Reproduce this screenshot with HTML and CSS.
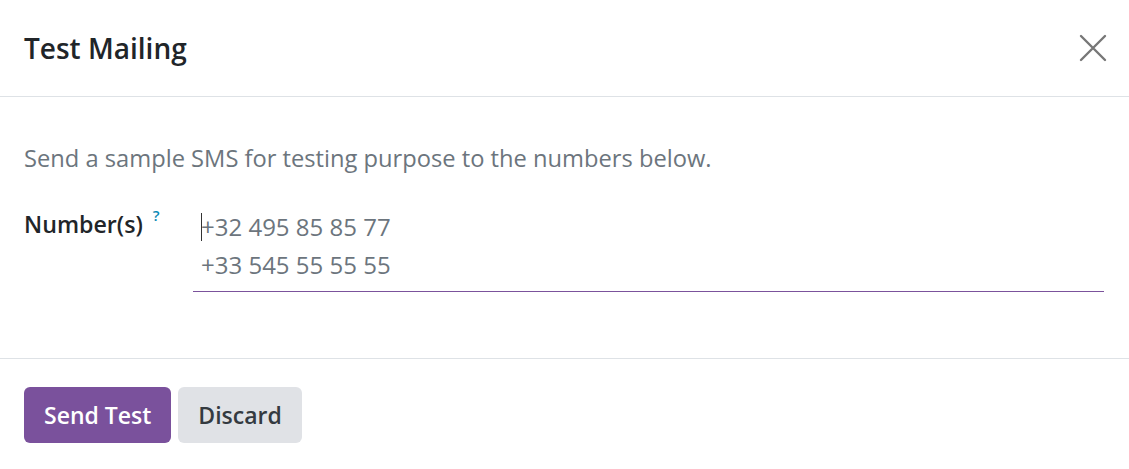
FILE: index.html
```html
<!DOCTYPE html>
<html lang="en">
<head>
    <meta charset="UTF-8">
    <title>Test Mailing</title>
    <link rel="stylesheet" href="styles.css">
</head>
<body>
    <div class="modal">
        <header class="modal-header">
            <h4 class="modal-title">Test Mailing</h4>
            <button type="button" class="btn-close" aria-label="Close">
                <svg width="28" height="28" viewBox="0 0 28 28">
                    <path d="M2 2 L26 26 M26 2 L2 26" stroke="#777" stroke-width="2.4" stroke-linecap="round" fill="none"/>
                </svg>
            </button>
        </header>
        <main class="modal-body">
            <p class="intro">Send a sample SMS for testing purpose to the numbers below.</p>
            <div class="form-row">
                <label class="field-label" for="numbers">Number(s)<sup class="tooltip">?</sup></label>
                <div class="field">
                    <div class="numbers" id="numbers"><span class="caret"></span>+32 495 85 85 77<br>+33 545 55 55 55</div>
                </div>
            </div>
        </main>
        <footer class="modal-footer">
            <button type="button" class="btn btn-primary">Send Test</button>
            <button type="button" class="btn btn-secondary">Discard</button>
        </footer>
    </div>
</body>
</html>
```
FILE: styles.css
```css
body {
    margin: 0;
    background-color: #fff;
    font-family: "Open Sans", "Noto Sans", sans-serif;
    color: #212529;
}
.modal {
    width: 1129px;
    height: 469px;
    display: flex;
    flex-direction: column;
}
.modal-header {
    height: 96px;
    display: flex;
    align-items: center;
    justify-content: space-between;
    padding: 0 22px 0 24px;
    border-bottom: 1px solid #dee2e6;
}
.modal-title {
    margin: 0;
    font-size: 28px;
    font-weight: 600;
    color: #212529;
}
.btn-close {
    background: none;
    border: none;
    padding: 0;
    width: 28px;
    height: 28px;
    cursor: pointer;
}
.modal-body {
    padding: 44px 25px 0 24px;
    height: 217px;
    border-bottom: 1px solid #dee2e6;
}
.intro {
    margin: 0 0 30px;
    font-size: 23.7px;
    line-height: 34px;
    color: #6c757d;
}
.form-row {
    display: flex;
}
.field-label {
    width: 169px;
    font-size: 23.2px;
    font-weight: 600;
    line-height: 34px;
    padding-top: 2px;
}
.tooltip {
    color: #0b8ab5;
    font-size: 15px;
    font-weight: 600;
    margin-left: 10px;
    vertical-align: top;
    position: relative;
    top: -9px;
}
.field {
    flex: 1;
    border-bottom: 1px solid #7b529c;
}
.numbers {
    padding: 3px 0 7px 8px;
    font-size: 24px;
    line-height: 38px;
    color: #6c757d;
    position: relative;
}
.caret {
    position: absolute;
    left: 8px;
    top: 8px;
    width: 1px;
    height: 28px;
    background-color: #333;
}
.modal-footer {
    display: flex;
    gap: 7px;
    padding: 28px 24px 0;
}
.btn {
    height: 56px;
    padding: 0 20px;
    border: none;
    border-radius: 6px;
    font-family: inherit;
    font-size: 23px;
    font-weight: 600;
    cursor: pointer;
}
.btn-primary {
    background-color: #7a519c;
    color: #fff;
}
.btn-secondary {
    background-color: #e0e2e6;
    color: #343a40;
}
```
